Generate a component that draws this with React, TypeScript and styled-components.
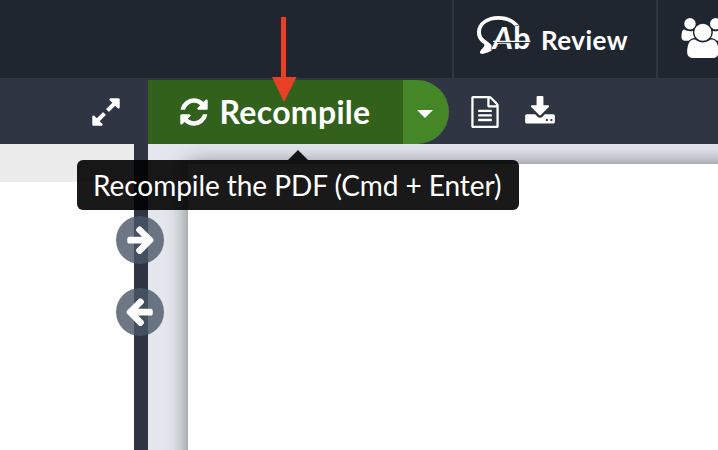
import React from "react";
import styled, { createGlobalStyle } from "styled-components";

const GlobalStyle = createGlobalStyle`
  * { box-sizing: border-box; }
  body { margin: 0; background: #fff; font-family: Lato, "Liberation Sans", sans-serif; }
`;

const Screen = styled.div`
  position: relative;
  width: 718px;
  height: 450px;
  overflow: hidden;
  display: flex;
  flex-direction: column;
`;

const Header = styled.header`
  flex: 0 0 78px;
  display: flex;
  justify-content: flex-end;
  background: #1f262f;
  color: #fff;
`;

const HeaderButton = styled.button<{ $width: number; $inset: number }>`
  flex: 0 0 ${(p) => p.$width}px;
  display: flex;
  align-items: flex-start;
  overflow: hidden;
  padding: 0 0 0 ${(p) => p.$inset}px;
  border: 0;
  border-left: 2px solid #2f3543;
  background: none;
  color: inherit;
  font: 700 26px/32px Lato, sans-serif;
  letter-spacing: 0.45px;
`;

const HeaderLabel = styled.span`
  margin: 24px 0 0 10px;
`;

const ReviewIcon = styled.svg`
  flex: none;
  width: 54px;
  height: 44px;
  margin-top: 12px;
  letter-spacing: 0;
`;

const UsersIcon = styled.svg`
  flex: none;
  width: 45.7px;
  height: 40px;
  margin-top: 17.5px;
`;

const Toolbar = styled.div`
  flex: 0 0 66px;
  display: flex;
  padding-top: 2px;
  background: #2f3543;
  color: #fff;
`;

const EditorTools = styled.div`
  flex: 0 0 148px;
  display: flex;
  align-items: center;
  padding-left: 90px;
`;

const Glyph = styled.svg`
  display: block;
  flex: none;
  width: 32px;
  height: 32px;
  fill: currentColor;
`;

const RecompileButton = styled.button`
  flex: 0 0 255px;
  display: flex;
  align-items: center;
  gap: 9.5px;
  padding: 0 0 0 30px;
  border: 0;
  background: #31611b;
  color: #fff;
  font: 700 32px/40px Lato, sans-serif;
  letter-spacing: 0.3px;
`;

const RecompileMenu = styled.button`
  flex: 0 0 46px;
  display: flex;
  align-items: center;
  justify-content: center;
  padding: 3px 2px 0 0;
  border: 0;
  border-radius: 0 32px 32px 0;
  background: #458727;
`;

const Caret = styled.i`
  border: 8px solid transparent;
  border-top-color: #fff;
  border-bottom: 0;
`;

const PdfTools = styled.div`
  display: flex;
  align-items: center;
  gap: 23px;
  padding-left: 20px;
`;

const Workspace = styled.main`
  flex: 1;
  display: flex;
`;

const Editor = styled.section`
  flex: 0 0 134px;
  background: #fff;
`;

const ActiveLine = styled.div`
  height: 38px;
  background: #ececec;
`;

const Resizer = styled.div`
  z-index: 1;
  flex: 0 0 14px;
  min-width: 0;
  width: 14px;
  display: flex;
  flex-direction: column;
  align-items: flex-start;
  gap: 24px;
  padding-top: 72px;
  background: #2f3543;
`;

const SyncButton = styled.button`
  flex: none;
  display: flex;
  align-items: center;
  justify-content: center;
  width: 48px;
  height: 48px;
  margin: 0 0 0 -18px;
  padding: 0 0 2px 1px;
  border: 0;
  border-radius: 50%;
  background: rgba(74, 86, 103, 0.8);
  color: #fff;
`;

const PdfPane = styled.section`
  flex: 1;
  min-width: 0;
  display: flex;
  padding: 20px 0 0 40px;
  overflow: hidden;
  background: #e4e8ee;
`;

const PdfPage = styled.div`
  flex: none;
  width: 900px;
  height: 800px;
  background: #fff;
  box-shadow: 0 0 20px rgba(0, 0, 0, 0.5);
`;

const Tooltip = styled.div`
  position: absolute;
  z-index: 2;
  left: 77px;
  top: 160px;
  width: 442px;
  height: 50px;
  padding: 5px 0 0 16px;
  border-radius: 6px;
  background: rgba(0, 0, 0, 0.9);
  color: #fff;
  font-size: 28px;
  line-height: 40px;
  letter-spacing: -0.06px;
  white-space: nowrap;

  &::before {
    content: "";
    position: absolute;
    left: 211px;
    top: -10px;
    border: 10px solid transparent;
    border-top: 0;
    border-bottom-color: rgba(0, 0, 0, 0.9);
  }
`;

const Pointer = styled.svg`
  position: absolute;
  z-index: 3;
  left: 272px;
  top: 17px;
  width: 25px;
  height: 85px;
  fill: #e74026;
`;

const paths = {
  expand:
    "M883 1056q0 13-10 23l-332 332 144 144q19 19 19 45t-19 45-45 19h-448q-26 0-45-19t-19-45v-448q0-26 19-45t45-19 45 19l144 144 332-332q10-10 23-10t23 10l114 114q10 10 10 23zm781-864v448q0 26-19 45t-45 19-45-19l-144-144-332 332q-10 10-23 10t-23-10l-114-114q-10-10-10-23t10-23l332-332-144-144q-19-19-19-45t19-45 45-19h448q26 0 45 19t19 45z",
  refresh:
    "M1639 1056q0 5-1 7-64 268-268 434.5t-478 166.5q-146 0-282.5-55t-243.5-157l-129 129q-19 19-45 19t-45-19-19-45v-448q0-26 19-45t45-19h448q26 0 45 19t19 45-19 45l-137 137q71 66 161 102t187 36q134 0 250-65t186-179q11-17 53-117 8-23 30-23h192q13 0 22.5 9.5t9.5 22.5zm25-800v448q0 26-19 45t-45 19h-448q-26 0-45-19t-19-45 19-45l138-138q-148-137-349-137-134 0-250 65t-186 179q-11 17-53 117-8 23-30 23h-199q-13 0-22.5-9.5t-9.5-22.5v-7q65-268 270-434.5t480-166.5q146 0 284 55.5t245 156.5l130-129q19-19 45-19t45 19 19 45z",
  right:
    "M1600 960q0 54-37 91l-651 651q-39 37-91 37-51 0-90-37l-75-75q-38-38-38-91t38-91l293-293h-704q-52 0-84.5-37.5t-32.5-90.5v-128q0-53 32.5-90.5t84.5-37.5h704l-293-294q-38-36-38-90t38-90l75-75q38-38 90-38 53 0 91 38l651 651q37 35 37 90z",
  file:
    "M1596 380q28 28 48 76t20 88v1152q0 40-28 68t-68 28h-1344q-40 0-68-28t-28-68v-1600q0-40 28-68t68-28h896q40 0 88 20t76 48zm-444-244v376h376q-10-29-22-41l-313-313q-12-12-41-22zm384 1528v-1024h-416q-40 0-68-28t-28-68v-416h-768v1536h1280zm-1024-864q0-14 9-23t23-9h704q14 0 23 9t9 23v64q0 14-9 23t-23 9h-704q-14 0-23-9t-9-23v-64zm736 224q14 0 23 9t9 23v64q0 14-9 23t-23 9h-704q-14 0-23-9t-9-23v-64q0-14 9-23t23-9h704zm0 256q14 0 23 9t9 23v64q0 14-9 23t-23 9h-704q-14 0-23-9t-9-23v-64q0-14 9-23t23-9h704z",
  download:
    "M1344 1344q0-26-19-45t-45-19-45 19-19 45 19 45 45 19 45-19 19-45zm256 0q0-26-19-45t-45-19-45 19-19 45 19 45 45 19 45-19 19-45zm128-224v320q0 40-28 68t-68 28h-1472q-40 0-68-28t-28-68v-320q0-40 28-68t68-28h465l135 136q58 56 136 56t136-56l136-136h464q40 0 68 28t28 68zm-325-569q17 41-14 70l-448 448q-18 19-45 19t-45-19l-448-448q-31-29-14-70 17-39 59-39h256v-448q0-26 19-45t45-19h256q26 0 45 19t19 45v448h256q42 0 59 39z",
  users:
    "M657 896q-162 5-265 128h-134q-82 0-138-40.5t-56-118.5q0-353 124-353 6 0 43.5 21t97.5 42.5 119 21.5q67 0 133-23-5 37-5 66 0 139 81 256zm1071 637q0 120-73 189.5t-194 69.5h-874q-121 0-194-69.5t-73-189.5q0-53 3.5-103.5t14-109 26.5-108.5 43-97.5 62-81 85.5-53.5 111.5-20q10 0 43 21.5t73 48 107 48 135 21.5 135-21.5 107-48 73-48 43-21.5q61 0 111.5 20t85.5 53.5 62 81 43 97.5 26.5 108.5 14 109 3.5 103.5zm-1024-1277q0 106-75 181t-181 75-181-75-75-181 75-181 181-75 181 75 75 181zm704 384q0 159-112.5 271.5t-271.5 112.5-271.5-112.5-112.5-271.5 112.5-271.5 271.5-112.5 271.5 112.5 112.5 271.5zm576 225q0 78-56 118.5t-138 40.5h-134q-103-123-265-128 81-117 81-256 0-29-5-66 66 23 133 23 59 0 119-21.5t97.5-42.5 43.5-21q124 0 124 353zm-128-609q0 106-75 181t-181 75-181-75-75-181 75-181 181-75 181 75 75 181z",
};

const Icon = ({ name, flip }: { name: keyof typeof paths; flip?: boolean }) => (
  <Glyph viewBox="0 0 1792 1792" aria-hidden="true">
    <path d={paths[name]} transform={flip ? "translate(1684 0) scale(-1 1)" : undefined} />
  </Glyph>
);

export default function App() {
  return (
    <Screen>
      <GlobalStyle />
      <Header>
        <HeaderButton $width={204} $inset={23}>
          <ReviewIcon viewBox="0 0 54 44" aria-hidden="true">
            <path
              d="M43 14.5C38 7 30 4 21.5 4C9 4 0 11 0 20.5C0 26 3 29.5 7.5 32.5C7 35.5 5 36.5 3 39.5Q2.5 42 5 42C9.5 41 13.5 40 16 37L19 34L14 34.5L14.5 33L10.5 29.5C6.5 27 4 24.5 4 20C4 12.500 11.5 7.8 21.5 7.8C28.5 7.8 34.5 10.5 38 14.5Z"
              fill="#fff"
            />
            <g fill="#fff" stroke="#1f262f" strokeWidth="1" paintOrder="stroke" fontFamily="Lato, sans-serif" fontWeight="700" fontSize="31">
              <text x="15.5" y="37" fontStyle="italic" textLength="20.5" lengthAdjust="spacingAndGlyphs">A</text>
              <text x="36.3" y="37" textLength="17.2" lengthAdjust="spacingAndGlyphs">b</text>
            </g>
            <path d="M20 30.6H53" stroke="#1f262f" strokeWidth="0.9" />
            <path d="M16 29.400H53.5" stroke="#fff" strokeWidth="1.300" />
          </ReviewIcon>
          <HeaderLabel>Review</HeaderLabel>
        </HeaderButton>
        <HeaderButton $width={62} $inset={22} aria-label="Share">
          <UsersIcon viewBox="0 0 2048 1792" fill="currentColor">
            <path d={paths.users} />
          </UsersIcon>
        </HeaderButton>
      </Header>
      <Toolbar>
        <EditorTools><Icon name="expand" /></EditorTools>
        <RecompileButton><Icon name="refresh" />Recompile</RecompileButton>
        <RecompileMenu aria-label="Compile options"><Caret /></RecompileMenu>
        <PdfTools><Icon name="file" /><Icon name="download" /></PdfTools>
      </Toolbar>
      <Workspace>
        <Editor><ActiveLine /></Editor>
        <Resizer>
          <SyncButton aria-label="Go to PDF"><Icon name="right" /></SyncButton>
          <SyncButton aria-label="Go to code"><Icon name="right" flip /></SyncButton>
        </Resizer>
        <PdfPane><PdfPage /></PdfPane>
      </Workspace>
      <Tooltip role="tooltip">Recompile the PDF (Cmd + Enter)</Tooltip>
      <Pointer viewBox="0 0 25 85" aria-hidden="true">
        <path d="M9 0H14V60H24.5L12 85L0 60H9Z" />
      </Pointer>
    </Screen>
  );
}
